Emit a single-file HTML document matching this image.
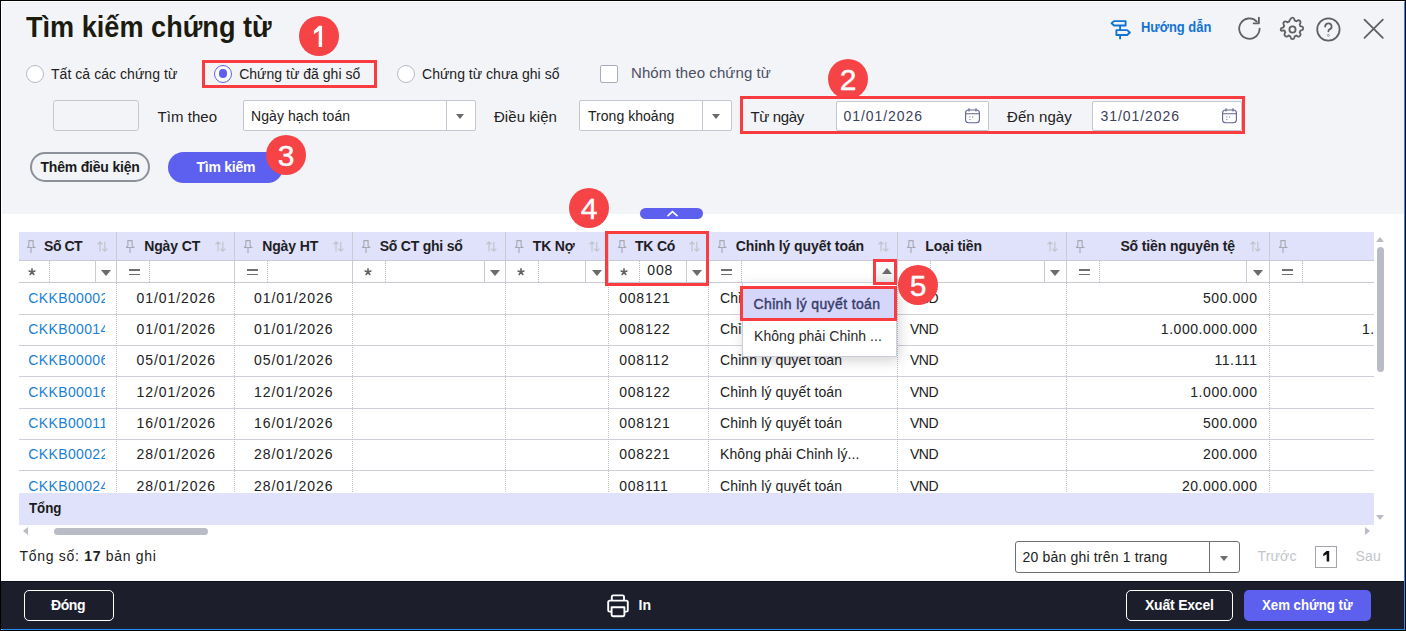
<!DOCTYPE html>
<html><head><meta charset="utf-8"><title>Tìm kiếm chứng từ</title>
<style>
html,body{margin:0;padding:0;width:1406px;height:631px;overflow:hidden;background:#000}
body{position:relative;font-family:"Liberation Sans", sans-serif}
.frame{position:absolute;left:1px;top:1px;width:1402px;height:627px;border-top:1px solid #fff;border-left:1px solid #fff;border-right:1px solid #1e8ff0;border-bottom:1px solid #1e8ff0;background:#f2f3f7;overflow:hidden}
.b{position:absolute;box-sizing:content-box}
.t{position:absolute;white-space:nowrap;line-height:1;font-family:"Liberation Sans", sans-serif}
.badge{position:absolute;width:40px;height:40px;border-radius:50%;background:#f54346;color:#fff;font-size:30px;line-height:42.5px;text-align:center;-webkit-text-stroke:0.4px #fff;font-family:"Liberation Sans", sans-serif}
</style></head>
<body>
<div id="root" style="position:absolute;left:0;top:0;width:1406px;height:631px">
<div class="frame"></div>
<div class="b" style="left:2px;top:2px;width:1402px;height:212px;background:#f3f4f8"></div>
<div class="b" style="left:2px;top:214px;width:1402px;height:367px;background:#fff"></div>
<div class="b" style="left:1px;top:581px;width:1403px;height:48px;background:#1d1e2c;border-top:1px solid #10121e;height:47px"></div>
<div class="t" style="left:26.3px;top:12.9px;font-size:29px;font-weight:700;color:#1c1b10;letter-spacing:0px;transform:scaleX(0.935);transform-origin:0 0">Tìm kiếm chứng từ</div>
<svg class="b" style="left:1108px;top:17px" width="24" height="24" viewBox="0 0 24 24" fill="none" stroke="#1273d4" stroke-width="1.9" stroke-linejoin="round">
<path d="M6 4.1 H17.6 V8.5 H6 L3.6 6.3 Z"/><path d="M8.4 13.1 H19.2 L21.9 15.5 L19.2 18 H8.4 Z"/>
<path d="M12.1 8.5 V13.1 M12.1 18 V22.3"/></svg>
<div class="t" style="left:1141.2px;top:20.3px;font-size:14px;font-weight:700;color:#1273d4;letter-spacing:0px;transform:scaleX(0.925);transform-origin:0 0">Hướng dẫn</div>
<svg class="b" style="left:1236px;top:15px" width="28" height="28" viewBox="0 0 28 28" fill="none" stroke="#606060" stroke-width="1.8" stroke-linecap="round" stroke-linejoin="round">
<path d="M23.6 13.6 A10.2 10.2 0 1 1 20.8 6.6"/><path d="M22.9 2.6 V8.3 H17.6"/></svg>
<svg class="b" style="left:1278px;top:14.6px" width="29" height="29" viewBox="0 0 24 24" fill="none" stroke="#606060" stroke-width="1.5" stroke-linejoin="round">
<path d="M12 2.2c.9 0 1.4.6 1.6 1.5l.2.9c.5.1 1 .3 1.4.6l.8-.5c.8-.5 1.6-.4 2.2.2s.7 1.4.2 2.2l-.5.8c.3.4.5.9.6 1.4l.9.2c.9.2 1.5.7 1.5 1.6s-.6 1.4-1.5 1.6l-.9.2c-.1.5-.3 1-.6 1.4l.5.8c.5.8.4 1.6-.2 2.2s-1.4.7-2.2.2l-.8-.5c-.4.3-.9.5-1.4.6l-.2.9c-.2.9-.7 1.5-1.6 1.5s-1.4-.6-1.6-1.5l-.2-.9c-.5-.1-1-.3-1.4-.6l-.8.5c-.8.5-1.6.4-2.2-.2s-.7-1.4-.2-2.2l.5-.8c-.3-.4-.5-.9-.6-1.4l-.9-.2C2.8 13.4 2.2 12.9 2.2 12s.6-1.4 1.5-1.6l.9-.2c.1-.5.3-1 .6-1.4l-.5-.8c-.5-.8-.4-1.6.2-2.2s1.4-.7 2.2-.2l.8.5c.4-.3.9-.5 1.4-.6l.2-.9C10.6 2.8 11.1 2.2 12 2.2z"/>
<circle cx="12" cy="12" r="2.55"/></svg>
<svg class="b" style="left:1314px;top:15px" width="29" height="29" viewBox="0 0 29 29" fill="none" stroke="#606060" stroke-width="1.75" stroke-linecap="round">
<circle cx="14.4" cy="14.5" r="11.2"/><path d="M11.2 11.6 A3.2 3.2 0 1 1 15.2 14.6 Q14.4 15 14.4 16.3"/><circle cx="14.4" cy="20.4" r="0.25" fill="#606060"/></svg>
<svg class="b" style="left:1362px;top:17px" width="24" height="24" viewBox="0 0 24 24" fill="none" stroke="#606060" stroke-width="1.8" stroke-linecap="round">
<path d="M2.5 2.6 L20.8 20.9 M20.8 2.6 L2.5 20.9"/></svg>
<div class="badge" style="left:299px;top:16px"><svg width="40" height="40" style="position:absolute;left:0;top:0"><path d="M20 9.8 H23.1 V31.1 H19.7 V14.9 L14.9 18.3 V14.7 Z" fill="#fff"/></svg></div>
<div class="b" style="left:26px;top:65px;width:16px;height:16px;border:1px solid #b8bbc4;border-radius:50%;background:#fff"></div>
<div class="t" style="left:51.0px;top:67.1px;font-size:14px;font-weight:400;color:#212121;letter-spacing:0.05px;">Tất cả các chứng từ</div>
<div class="b" style="left:202px;top:60px;width:169px;height:22px;border:3px solid #f93c3f"></div>
<div class="b" style="left:214px;top:65px;width:16px;height:16px;border:1px solid #5d5fee;border-radius:50%;background:#fff"></div>
<div class="b" style="left:218.6px;top:68.9px;width:8.8px;height:8.8px;border-radius:50%;background:#5d5fee"></div>
<div class="t" style="left:239.2px;top:67.1px;font-size:14px;font-weight:400;color:#212121;letter-spacing:0.02px;">Chứng từ đã ghi sổ</div>
<div class="b" style="left:397px;top:65px;width:16px;height:16px;border:1px solid #b8bbc4;border-radius:50%;background:#fff"></div>
<div class="t" style="left:422.0px;top:67.1px;font-size:14px;font-weight:400;color:#212121;letter-spacing:0.02px;">Chứng từ chưa ghi sổ</div>
<div class="b" style="left:600px;top:65px;width:16px;height:16px;border:1px solid #a9acbd;border-radius:2px;background:#fff"></div>
<div class="t" style="left:631.0px;top:65.1px;font-size:15px;font-weight:400;color:#4b4f62;letter-spacing:0.08px;">Nhóm theo chứng từ</div>
<div class="badge" style="left:828px;top:58.5px">2</div>
<div class="b" style="left:53px;top:100px;width:84px;height:29px;border:1px solid #c6c8cd;border-radius:3px"></div>
<div class="t" style="left:157.5px;top:109.0px;font-size:15px;font-weight:400;color:#212121;letter-spacing:0.05px;">Tìm theo</div>
<div class="b" style="left:243px;top:100px;width:231px;height:29px;border:1px solid #c4c6d0;border-radius:2px;background:#fff"></div>
<div class="b" style="left:446px;top:101px;width:1px;height:29px;background:#c4c6d0"></div>
<div class="b" style="left:456.2px;top:114.0px;width:0;height:0;border-left:4.3px solid transparent;border-right:4.3px solid transparent;border-top:5.8px solid #6b6b6b"></div>
<div class="t" style="left:251.0px;top:108.9px;font-size:14px;font-weight:400;color:#212121;letter-spacing:0.08px;">Ngày hạch toán</div>
<div class="t" style="left:494.0px;top:108.9px;font-size:15px;font-weight:400;color:#212121;letter-spacing:0.04px;">Điều kiện</div>
<div class="b" style="left:579px;top:100px;width:151px;height:29px;border:1px solid #c4c6d0;border-radius:2px;background:#fff"></div>
<div class="b" style="left:702px;top:101px;width:1px;height:29px;background:#c4c6d0"></div>
<div class="b" style="left:711.7px;top:114.0px;width:0;height:0;border-left:4.3px solid transparent;border-right:4.3px solid transparent;border-top:5.8px solid #6b6b6b"></div>
<div class="t" style="left:588.0px;top:108.9px;font-size:14px;font-weight:400;color:#212121;letter-spacing:0.04px;">Trong khoảng</div>
<div class="b" style="left:740px;top:96px;width:499px;height:32px;border:3px solid #f93c3f"></div>
<div class="t" style="left:750.5px;top:109.0px;font-size:15px;font-weight:400;color:#212121;letter-spacing:-0.35px;">Từ ngày</div>
<div class="t" style="left:1007.0px;top:109.0px;font-size:15px;font-weight:400;color:#212121;letter-spacing:0.07px;">Đến ngày</div>
<div class="b" style="left:836px;top:101px;width:151px;height:28px;border:1px solid #c4c6d0;border-radius:2px;background:#fff"></div>
<div class="t" style="left:843.5px;top:108.9px;font-size:14px;font-weight:400;color:#3b4159;letter-spacing:0.95px;">01/01/2026</div>
<svg class="b" style="left:963.5px;top:107px" width="17" height="17" viewBox="0 0 17 17" fill="none" stroke="#5f6590" stroke-width="1.1">
<rect x="1.6" y="3" width="13.8" height="12.8" rx="3"/><path d="M5 1.2 V4.4 M12 1.2 V4.4 M1.6 6.8 H15.4"/><path d="M5.4 10 h1 M8.2 10 h1 M5.4 12.6 h1" stroke-width="1"/></svg>
<div class="b" style="left:1092px;top:101px;width:148px;height:28px;border:1px solid #c4c6d0;border-radius:2px;background:#fff"></div>
<div class="t" style="left:1100.5px;top:108.9px;font-size:14px;font-weight:400;color:#3b4159;letter-spacing:0.95px;">31/01/2026</div>
<svg class="b" style="left:1220.5px;top:107px" width="17" height="17" viewBox="0 0 17 17" fill="none" stroke="#5f6590" stroke-width="1.1">
<rect x="1.6" y="3" width="13.8" height="12.8" rx="3"/><path d="M5 1.2 V4.4 M12 1.2 V4.4 M1.6 6.8 H15.4"/><path d="M5.4 10 h1 M8.2 10 h1 M5.4 12.6 h1" stroke-width="1"/></svg>
<div class="b" style="left:30px;top:152px;width:116px;height:26px;border:2px solid #8b9099;border-radius:15px"></div>
<div class="t" style="left:40.5px;top:160.4px;font-size:14px;font-weight:700;color:#1a1a1a;letter-spacing:-0.2px;">Thêm điều kiện</div>
<div class="b" style="left:168px;top:152px;width:115px;height:31px;background:#5d5fee;border-radius:16px"></div>
<div class="t" style="left:196.5px;top:160.4px;font-size:14px;font-weight:700;color:#fff;letter-spacing:-0.25px;">Tìm kiếm</div>
<div class="badge" style="left:266px;top:135px">3</div>
<div class="b" style="left:640px;top:208px;width:63px;height:11px;background:#5d5fee;border-radius:6px"></div>
<svg class="b" style="left:666px;top:209px" width="13" height="9" viewBox="0 0 13 9" fill="none" stroke="#fff" stroke-width="1.6"><path d="M1.5 7.2 L6.5 2.6 L11.5 7.2"/></svg>
<div class="badge" style="left:569px;top:188px">4</div>
<div class="b" style="left:19px;top:232px;width:1355px;height:293px;overflow:hidden" id="tbl">
<div class="b" style="left:0px;top:0px;width:1500px;height:28px;background:#e0e1fb"></div>
<div class="b" style="left:0px;top:28px;width:1500px;height:1px;background:#c8cad6"></div>
<div class="b" style="left:0px;top:50px;width:1500px;height:1px;background:#c8cad6"></div>
<div class="b" style="left:0px;top:82px;width:1500px;height:1px;background:#cdcfd9"></div>
<div class="b" style="left:0px;top:113px;width:1500px;height:1px;background:#cdcfd9"></div>
<div class="b" style="left:0px;top:144px;width:1500px;height:1px;background:#cdcfd9"></div>
<div class="b" style="left:0px;top:176px;width:1500px;height:1px;background:#cdcfd9"></div>
<div class="b" style="left:0px;top:207px;width:1500px;height:1px;background:#cdcfd9"></div>
<div class="b" style="left:0px;top:238px;width:1500px;height:1px;background:#cdcfd9"></div>
<div class="b" style="left:97px;top:0px;width:1px;height:50px;background:#c8cad6"></div>
<div class="b" style="left:97px;top:51px;width:1px;height:210px;background-image:linear-gradient(#c0c2cc 50%, transparent 50%);background-size:1px 2px"></div>
<div class="b" style="left:215px;top:0px;width:1px;height:50px;background:#c8cad6"></div>
<div class="b" style="left:215px;top:51px;width:1px;height:210px;background-image:linear-gradient(#c0c2cc 50%, transparent 50%);background-size:1px 2px"></div>
<div class="b" style="left:333px;top:0px;width:1px;height:50px;background:#c8cad6"></div>
<div class="b" style="left:333px;top:51px;width:1px;height:210px;background-image:linear-gradient(#c0c2cc 50%, transparent 50%);background-size:1px 2px"></div>
<div class="b" style="left:486px;top:0px;width:1px;height:50px;background:#c8cad6"></div>
<div class="b" style="left:486px;top:51px;width:1px;height:210px;background-image:linear-gradient(#c0c2cc 50%, transparent 50%);background-size:1px 2px"></div>
<div class="b" style="left:589px;top:0px;width:1px;height:50px;background:#c8cad6"></div>
<div class="b" style="left:589px;top:51px;width:1px;height:210px;background-image:linear-gradient(#c0c2cc 50%, transparent 50%);background-size:1px 2px"></div>
<div class="b" style="left:689px;top:0px;width:1px;height:50px;background:#c8cad6"></div>
<div class="b" style="left:689px;top:51px;width:1px;height:210px;background-image:linear-gradient(#c0c2cc 50%, transparent 50%);background-size:1px 2px"></div>
<div class="b" style="left:878px;top:0px;width:1px;height:50px;background:#c8cad6"></div>
<div class="b" style="left:878px;top:51px;width:1px;height:210px;background-image:linear-gradient(#c0c2cc 50%, transparent 50%);background-size:1px 2px"></div>
<div class="b" style="left:1047px;top:0px;width:1px;height:50px;background:#c8cad6"></div>
<div class="b" style="left:1047px;top:51px;width:1px;height:210px;background-image:linear-gradient(#c0c2cc 50%, transparent 50%);background-size:1px 2px"></div>
<div class="b" style="left:1250px;top:0px;width:1px;height:50px;background:#c8cad6"></div>
<div class="b" style="left:1250px;top:51px;width:1px;height:210px;background-image:linear-gradient(#c0c2cc 50%, transparent 50%);background-size:1px 2px"></div>
<svg class="b" style="left:7.5px;top:8px" width="10" height="14" viewBox="0 0 10 14" fill="none" stroke="#a6a9b3" stroke-width="1.1"><path d="M1.4 0.6 H6.6 M1.9 0.6 V5.8 L0.3 7.5 H7.7 L6.1 5.8 V0.6 M4 7.5 V12.9"/></svg>
<svg class="b" style="left:76px;top:9px" width="14" height="12" viewBox="0 0 14 12" fill="none" stroke="#c0c2cc" stroke-width="1.15"><path d="M5 10.4 V0.9 M2.5 3.4 L5 0.9 L7.5 3.4 M9.8 0.7 V10.2 M7.3 7.7 L9.8 10.2 L12.3 7.7"/></svg>
<div class="t" style="left:25.0px;top:6.9px;font-size:14px;font-weight:700;color:#1e1e24;letter-spacing:-0.45px;">Số CT</div>
<svg class="b" style="left:107.30000000000001px;top:8px" width="10" height="14" viewBox="0 0 10 14" fill="none" stroke="#a6a9b3" stroke-width="1.1"><path d="M1.4 0.6 H6.6 M1.9 0.6 V5.8 L0.3 7.5 H7.7 L6.1 5.8 V0.6 M4 7.5 V12.9"/></svg>
<svg class="b" style="left:194px;top:9px" width="14" height="12" viewBox="0 0 14 12" fill="none" stroke="#c0c2cc" stroke-width="1.15"><path d="M5 10.4 V0.9 M2.5 3.4 L5 0.9 L7.5 3.4 M9.8 0.7 V10.2 M7.3 7.7 L9.8 10.2 L12.3 7.7"/></svg>
<div class="t" style="left:125.2px;top:6.9px;font-size:14px;font-weight:700;color:#1e1e24;letter-spacing:-0.12px;">Ngày CT</div>
<svg class="b" style="left:225.3px;top:8px" width="10" height="14" viewBox="0 0 10 14" fill="none" stroke="#a6a9b3" stroke-width="1.1"><path d="M1.4 0.6 H6.6 M1.9 0.6 V5.8 L0.3 7.5 H7.7 L6.1 5.8 V0.6 M4 7.5 V12.9"/></svg>
<svg class="b" style="left:312px;top:9px" width="14" height="12" viewBox="0 0 14 12" fill="none" stroke="#c0c2cc" stroke-width="1.15"><path d="M5 10.4 V0.9 M2.5 3.4 L5 0.9 L7.5 3.4 M9.8 0.7 V10.2 M7.3 7.7 L9.8 10.2 L12.3 7.7"/></svg>
<div class="t" style="left:243.2px;top:6.9px;font-size:14px;font-weight:700;color:#1e1e24;letter-spacing:-0.12px;">Ngày HT</div>
<svg class="b" style="left:343.3px;top:8px" width="10" height="14" viewBox="0 0 10 14" fill="none" stroke="#a6a9b3" stroke-width="1.1"><path d="M1.4 0.6 H6.6 M1.9 0.6 V5.8 L0.3 7.5 H7.7 L6.1 5.8 V0.6 M4 7.5 V12.9"/></svg>
<svg class="b" style="left:465px;top:9px" width="14" height="12" viewBox="0 0 14 12" fill="none" stroke="#c0c2cc" stroke-width="1.15"><path d="M5 10.4 V0.9 M2.5 3.4 L5 0.9 L7.5 3.4 M9.8 0.7 V10.2 M7.3 7.7 L9.8 10.2 L12.3 7.7"/></svg>
<div class="t" style="left:360.7px;top:6.9px;font-size:14px;font-weight:700;color:#1e1e24;letter-spacing:-0.22px;">Số CT ghi sổ</div>
<svg class="b" style="left:496.29999999999995px;top:8px" width="10" height="14" viewBox="0 0 10 14" fill="none" stroke="#a6a9b3" stroke-width="1.1"><path d="M1.4 0.6 H6.6 M1.9 0.6 V5.8 L0.3 7.5 H7.7 L6.1 5.8 V0.6 M4 7.5 V12.9"/></svg>
<svg class="b" style="left:568px;top:9px" width="14" height="12" viewBox="0 0 14 12" fill="none" stroke="#c0c2cc" stroke-width="1.15"><path d="M5 10.4 V0.9 M2.5 3.4 L5 0.9 L7.5 3.4 M9.8 0.7 V10.2 M7.3 7.7 L9.8 10.2 L12.3 7.7"/></svg>
<div class="t" style="left:513.8px;top:6.9px;font-size:14px;font-weight:700;color:#1e1e24;letter-spacing:-0.2px;">TK Nợ</div>
<svg class="b" style="left:599.3px;top:8px" width="10" height="14" viewBox="0 0 10 14" fill="none" stroke="#a6a9b3" stroke-width="1.1"><path d="M1.4 0.6 H6.6 M1.9 0.6 V5.8 L0.3 7.5 H7.7 L6.1 5.8 V0.6 M4 7.5 V12.9"/></svg>
<svg class="b" style="left:668px;top:9px" width="14" height="12" viewBox="0 0 14 12" fill="none" stroke="#c0c2cc" stroke-width="1.15"><path d="M5 10.4 V0.9 M2.5 3.4 L5 0.9 L7.5 3.4 M9.8 0.7 V10.2 M7.3 7.7 L9.8 10.2 L12.3 7.7"/></svg>
<div class="t" style="left:616.0px;top:6.9px;font-size:14px;font-weight:700;color:#1e1e24;letter-spacing:-0.2px;">TK Có</div>
<svg class="b" style="left:699.3px;top:8px" width="10" height="14" viewBox="0 0 10 14" fill="none" stroke="#a6a9b3" stroke-width="1.1"><path d="M1.4 0.6 H6.6 M1.9 0.6 V5.8 L0.3 7.5 H7.7 L6.1 5.8 V0.6 M4 7.5 V12.9"/></svg>
<svg class="b" style="left:857px;top:9px" width="14" height="12" viewBox="0 0 14 12" fill="none" stroke="#c0c2cc" stroke-width="1.15"><path d="M5 10.4 V0.9 M2.5 3.4 L5 0.9 L7.5 3.4 M9.8 0.7 V10.2 M7.3 7.7 L9.8 10.2 L12.3 7.7"/></svg>
<div class="t" style="left:716.7px;top:6.9px;font-size:14px;font-weight:700;color:#1e1e24;letter-spacing:-0.08px;">Chỉnh lý quyết toán</div>
<svg class="b" style="left:888.3px;top:8px" width="10" height="14" viewBox="0 0 10 14" fill="none" stroke="#a6a9b3" stroke-width="1.1"><path d="M1.4 0.6 H6.6 M1.9 0.6 V5.8 L0.3 7.5 H7.7 L6.1 5.8 V0.6 M4 7.5 V12.9"/></svg>
<svg class="b" style="left:1026px;top:9px" width="14" height="12" viewBox="0 0 14 12" fill="none" stroke="#c0c2cc" stroke-width="1.15"><path d="M5 10.4 V0.9 M2.5 3.4 L5 0.9 L7.5 3.4 M9.8 0.7 V10.2 M7.3 7.7 L9.8 10.2 L12.3 7.7"/></svg>
<div class="t" style="left:906.3px;top:6.9px;font-size:14px;font-weight:700;color:#1e1e24;letter-spacing:-0.1px;">Loại tiền</div>
<svg class="b" style="left:1057.3px;top:8px" width="10" height="14" viewBox="0 0 10 14" fill="none" stroke="#a6a9b3" stroke-width="1.1"><path d="M1.4 0.6 H6.6 M1.9 0.6 V5.8 L0.3 7.5 H7.7 L6.1 5.8 V0.6 M4 7.5 V12.9"/></svg>
<svg class="b" style="left:1229px;top:9px" width="14" height="12" viewBox="0 0 14 12" fill="none" stroke="#c0c2cc" stroke-width="1.15"><path d="M5 10.4 V0.9 M2.5 3.4 L5 0.9 L7.5 3.4 M9.8 0.7 V10.2 M7.3 7.7 L9.8 10.2 L12.3 7.7"/></svg>
<div class="t" style="left:1101.4px;top:6.9px;font-size:14px;font-weight:700;color:#1e1e24;letter-spacing:-0.12px;">Số tiền nguyên tệ</div>
<svg class="b" style="left:1260.3px;top:8px" width="10" height="14" viewBox="0 0 10 14" fill="none" stroke="#a6a9b3" stroke-width="1.1"><path d="M1.4 0.6 H6.6 M1.9 0.6 V5.8 L0.3 7.5 H7.7 L6.1 5.8 V0.6 M4 7.5 V12.9"/></svg>
<svg class="b" style="left:9.3px;top:35.5px" width="8" height="8" viewBox="0 0 8 8" stroke="#626262" stroke-width="1.6" stroke-linecap="round"><path d="M4 4 L4 0.9 M4 4 L6.9 3.05 M4 4 L5.8 6.5 M4 4 L2.2 6.5 M4 4 L1.1 3.05"/></svg>
<div class="b" style="left:30px;top:29px;width:1px;height:21px;background-image:linear-gradient(#b5b7c1 50%, transparent 50%);background-size:1px 2px"></div>
<div class="b" style="left:76px;top:29px;width:1px;height:21px;background:#c8cad6"></div>
<div class="b" style="left:81.55px;top:38px;width:0px;height:0px;border-left:5px solid transparent;border-right:5px solid transparent;border-top:6px solid #6b6b6b"></div>
<div class="b" style="left:110px;top:37.30000000000001px;width:11px;height:1.5px;background:#707070"></div>
<div class="b" style="left:110px;top:41.80000000000001px;width:11px;height:1.5px;background:#707070"></div>
<div class="b" style="left:130px;top:29px;width:1px;height:21px;background-image:linear-gradient(#b5b7c1 50%, transparent 50%);background-size:1px 2px"></div>
<div class="b" style="left:228px;top:37.30000000000001px;width:11px;height:1.5px;background:#707070"></div>
<div class="b" style="left:228px;top:41.80000000000001px;width:11px;height:1.5px;background:#707070"></div>
<div class="b" style="left:248px;top:29px;width:1px;height:21px;background-image:linear-gradient(#b5b7c1 50%, transparent 50%);background-size:1px 2px"></div>
<svg class="b" style="left:345.2px;top:35.5px" width="8" height="8" viewBox="0 0 8 8" stroke="#626262" stroke-width="1.6" stroke-linecap="round"><path d="M4 4 L4 0.9 M4 4 L6.9 3.05 M4 4 L5.8 6.5 M4 4 L2.2 6.5 M4 4 L1.1 3.05"/></svg>
<div class="b" style="left:366px;top:29px;width:1px;height:21px;background-image:linear-gradient(#b5b7c1 50%, transparent 50%);background-size:1px 2px"></div>
<div class="b" style="left:465px;top:29px;width:1px;height:21px;background:#c8cad6"></div>
<div class="b" style="left:470.6px;top:38px;width:0px;height:0px;border-left:5px solid transparent;border-right:5px solid transparent;border-top:6px solid #6b6b6b"></div>
<svg class="b" style="left:498.2px;top:35.5px" width="8" height="8" viewBox="0 0 8 8" stroke="#626262" stroke-width="1.6" stroke-linecap="round"><path d="M4 4 L4 0.9 M4 4 L6.9 3.05 M4 4 L5.8 6.5 M4 4 L2.2 6.5 M4 4 L1.1 3.05"/></svg>
<div class="b" style="left:519px;top:29px;width:1px;height:21px;background-image:linear-gradient(#b5b7c1 50%, transparent 50%);background-size:1px 2px"></div>
<div class="b" style="left:566px;top:29px;width:1px;height:21px;background:#c8cad6"></div>
<div class="b" style="left:572.6px;top:38px;width:0px;height:0px;border-left:5px solid transparent;border-right:5px solid transparent;border-top:6px solid #6b6b6b"></div>
<svg class="b" style="left:601.2px;top:35.5px" width="8" height="8" viewBox="0 0 8 8" stroke="#626262" stroke-width="1.6" stroke-linecap="round"><path d="M4 4 L4 0.9 M4 4 L6.9 3.05 M4 4 L5.8 6.5 M4 4 L2.2 6.5 M4 4 L1.1 3.05"/></svg>
<div class="b" style="left:620px;top:29px;width:1px;height:21px;background-image:linear-gradient(#b5b7c1 50%, transparent 50%);background-size:1px 2px"></div>
<div class="b" style="left:667px;top:29px;width:1px;height:21px;background:#c8cad6"></div>
<div class="b" style="left:673.0px;top:38px;width:0px;height:0px;border-left:5px solid transparent;border-right:5px solid transparent;border-top:6px solid #6b6b6b"></div>
<div class="b" style="left:702px;top:37.30000000000001px;width:11px;height:1.5px;background:#707070"></div>
<div class="b" style="left:702px;top:41.80000000000001px;width:11px;height:1.5px;background:#707070"></div>
<div class="b" style="left:722px;top:29px;width:1px;height:21px;background-image:linear-gradient(#b5b7c1 50%, transparent 50%);background-size:1px 2px"></div>
<div class="b" style="left:891px;top:37.30000000000001px;width:11px;height:1.5px;background:#707070"></div>
<div class="b" style="left:891px;top:41.80000000000001px;width:11px;height:1.5px;background:#707070"></div>
<div class="b" style="left:911px;top:29px;width:1px;height:21px;background-image:linear-gradient(#b5b7c1 50%, transparent 50%);background-size:1px 2px"></div>
<div class="b" style="left:1025px;top:29px;width:1px;height:21px;background:#c8cad6"></div>
<div class="b" style="left:1031.45px;top:38px;width:0px;height:0px;border-left:5px solid transparent;border-right:5px solid transparent;border-top:6px solid #6b6b6b"></div>
<div class="b" style="left:1060px;top:37.30000000000001px;width:11px;height:1.5px;background:#707070"></div>
<div class="b" style="left:1060px;top:41.80000000000001px;width:11px;height:1.5px;background:#707070"></div>
<div class="b" style="left:1080px;top:29px;width:1px;height:21px;background-image:linear-gradient(#b5b7c1 50%, transparent 50%);background-size:1px 2px"></div>
<div class="b" style="left:1227px;top:29px;width:1px;height:21px;background:#c8cad6"></div>
<div class="b" style="left:1234.0px;top:38px;width:0px;height:0px;border-left:5px solid transparent;border-right:5px solid transparent;border-top:6px solid #6b6b6b"></div>
<div class="b" style="left:1263px;top:37.30000000000001px;width:11px;height:1.5px;background:#707070"></div>
<div class="b" style="left:1263px;top:41.80000000000001px;width:11px;height:1.5px;background:#707070"></div>
<div class="b" style="left:1283px;top:29px;width:1px;height:21px;background-image:linear-gradient(#b5b7c1 50%, transparent 50%);background-size:1px 2px"></div>
<div class="t" style="left:628.3px;top:31.3px;font-size:14px;font-weight:400;color:#212121;letter-spacing:0.8px;">008</div>
<div class="b" style="left:856px;top:29px;width:21px;height:21px;background:linear-gradient(#fff,#ececee)"></div>
<div class="b" style="left:863px;top:35.60000000000002px;width:0px;height:0px;border-left:5px solid transparent;border-right:5px solid transparent;border-bottom:6px solid #6b6b6b"></div>
<div class="b" style="left:9.3px;top:59.3px;width:76.7px;height:16px;overflow:hidden"><div class="t" style="left:0;top:0;font-size:14px;color:#1a80d6;letter-spacing:0.37px">CKKB00002</div></div>
<div class="t" style="left:117.5px;top:59.3px;font-size:14px;font-weight:400;color:#212121;letter-spacing:0.95px;">01/01/2026</div>
<div class="t" style="left:235.0px;top:59.3px;font-size:14px;font-weight:400;color:#212121;letter-spacing:0.95px;">01/01/2026</div>
<div class="t" style="left:600.2px;top:59.3px;font-size:14px;font-weight:400;color:#212121;letter-spacing:0.8px;">008121</div>
<div class="t" style="left:701.0px;top:59.3px;font-size:14px;font-weight:400;color:#212121;letter-spacing:0.12px;">Chỉnh lý quyết toán</div>
<div class="t" style="left:891.0px;top:59.3px;font-size:14px;font-weight:400;color:#212121;letter-spacing:-0.5px;">VND</div>
<div class="t" style="right:116.5px;top:59.3px;font-size:14px;color:#212121;letter-spacing:0.55px">500.000</div>
<div class="b" style="left:9.3px;top:90.3px;width:76.7px;height:16px;overflow:hidden"><div class="t" style="left:0;top:0;font-size:14px;color:#1a80d6;letter-spacing:0.37px">CKKB00014</div></div>
<div class="t" style="left:117.5px;top:90.3px;font-size:14px;font-weight:400;color:#212121;letter-spacing:0.95px;">01/01/2026</div>
<div class="t" style="left:235.0px;top:90.3px;font-size:14px;font-weight:400;color:#212121;letter-spacing:0.95px;">01/01/2026</div>
<div class="t" style="left:600.2px;top:90.3px;font-size:14px;font-weight:400;color:#212121;letter-spacing:0.8px;">008122</div>
<div class="t" style="left:701.0px;top:90.3px;font-size:14px;font-weight:400;color:#212121;letter-spacing:0.12px;">Chỉnh lý quyết toán</div>
<div class="t" style="left:891.0px;top:90.3px;font-size:14px;font-weight:400;color:#212121;letter-spacing:-0.5px;">VND</div>
<div class="t" style="right:116.5px;top:90.3px;font-size:14px;color:#212121;letter-spacing:0.55px">1.000.000.000</div>
<div class="t" style="left:1343.0px;top:90.3px;font-size:14px;font-weight:400;color:#212121;letter-spacing:0.55px;">1.</div>
<div class="b" style="left:9.3px;top:121.3px;width:76.7px;height:16px;overflow:hidden"><div class="t" style="left:0;top:0;font-size:14px;color:#1a80d6;letter-spacing:0.37px">CKKB00006</div></div>
<div class="t" style="left:117.5px;top:121.3px;font-size:14px;font-weight:400;color:#212121;letter-spacing:0.95px;">05/01/2026</div>
<div class="t" style="left:235.0px;top:121.3px;font-size:14px;font-weight:400;color:#212121;letter-spacing:0.95px;">05/01/2026</div>
<div class="t" style="left:600.2px;top:121.3px;font-size:14px;font-weight:400;color:#212121;letter-spacing:0.8px;">008112</div>
<div class="t" style="left:701.0px;top:121.3px;font-size:14px;font-weight:400;color:#212121;letter-spacing:0.12px;">Chỉnh lý quyết toán</div>
<div class="t" style="left:891.0px;top:121.3px;font-size:14px;font-weight:400;color:#212121;letter-spacing:-0.5px;">VND</div>
<div class="t" style="right:116.5px;top:121.3px;font-size:14px;color:#212121;letter-spacing:0.55px">11.111</div>
<div class="b" style="left:9.3px;top:153.3px;width:76.7px;height:16px;overflow:hidden"><div class="t" style="left:0;top:0;font-size:14px;color:#1a80d6;letter-spacing:0.37px">CKKB00016</div></div>
<div class="t" style="left:117.5px;top:153.3px;font-size:14px;font-weight:400;color:#212121;letter-spacing:0.95px;">12/01/2026</div>
<div class="t" style="left:235.0px;top:153.3px;font-size:14px;font-weight:400;color:#212121;letter-spacing:0.95px;">12/01/2026</div>
<div class="t" style="left:600.2px;top:153.3px;font-size:14px;font-weight:400;color:#212121;letter-spacing:0.8px;">008122</div>
<div class="t" style="left:701.0px;top:153.3px;font-size:14px;font-weight:400;color:#212121;letter-spacing:0.12px;">Chỉnh lý quyết toán</div>
<div class="t" style="left:891.0px;top:153.3px;font-size:14px;font-weight:400;color:#212121;letter-spacing:-0.5px;">VND</div>
<div class="t" style="right:116.5px;top:153.3px;font-size:14px;color:#212121;letter-spacing:0.55px">1.000.000</div>
<div class="b" style="left:9.3px;top:184.3px;width:76.7px;height:16px;overflow:hidden"><div class="t" style="left:0;top:0;font-size:14px;color:#1a80d6;letter-spacing:0.37px">CKKB00011</div></div>
<div class="t" style="left:117.5px;top:184.3px;font-size:14px;font-weight:400;color:#212121;letter-spacing:0.95px;">16/01/2026</div>
<div class="t" style="left:235.0px;top:184.3px;font-size:14px;font-weight:400;color:#212121;letter-spacing:0.95px;">16/01/2026</div>
<div class="t" style="left:600.2px;top:184.3px;font-size:14px;font-weight:400;color:#212121;letter-spacing:0.8px;">008121</div>
<div class="t" style="left:701.0px;top:184.3px;font-size:14px;font-weight:400;color:#212121;letter-spacing:0.12px;">Chỉnh lý quyết toán</div>
<div class="t" style="left:891.0px;top:184.3px;font-size:14px;font-weight:400;color:#212121;letter-spacing:-0.5px;">VND</div>
<div class="t" style="right:116.5px;top:184.3px;font-size:14px;color:#212121;letter-spacing:0.55px">500.000</div>
<div class="b" style="left:9.3px;top:215.3px;width:76.7px;height:16px;overflow:hidden"><div class="t" style="left:0;top:0;font-size:14px;color:#1a80d6;letter-spacing:0.37px">CKKB00022</div></div>
<div class="t" style="left:117.5px;top:215.3px;font-size:14px;font-weight:400;color:#212121;letter-spacing:0.95px;">28/01/2026</div>
<div class="t" style="left:235.0px;top:215.3px;font-size:14px;font-weight:400;color:#212121;letter-spacing:0.95px;">28/01/2026</div>
<div class="t" style="left:600.2px;top:215.3px;font-size:14px;font-weight:400;color:#212121;letter-spacing:0.8px;">008221</div>
<div class="t" style="left:701.0px;top:215.3px;font-size:14px;font-weight:400;color:#212121;letter-spacing:0.12px;">Không phải Chỉnh lý...</div>
<div class="t" style="left:891.0px;top:215.3px;font-size:14px;font-weight:400;color:#212121;letter-spacing:-0.5px;">VND</div>
<div class="t" style="right:116.5px;top:215.3px;font-size:14px;color:#212121;letter-spacing:0.55px">200.000</div>
<div class="b" style="left:9.3px;top:247.3px;width:76.7px;height:16px;overflow:hidden"><div class="t" style="left:0;top:0;font-size:14px;color:#1a80d6;letter-spacing:0.37px">CKKB00024</div></div>
<div class="t" style="left:117.5px;top:247.3px;font-size:14px;font-weight:400;color:#212121;letter-spacing:0.95px;">28/01/2026</div>
<div class="t" style="left:235.0px;top:247.3px;font-size:14px;font-weight:400;color:#212121;letter-spacing:0.95px;">28/01/2026</div>
<div class="t" style="left:600.2px;top:247.3px;font-size:14px;font-weight:400;color:#212121;letter-spacing:0.8px;">008111</div>
<div class="t" style="left:701.0px;top:247.3px;font-size:14px;font-weight:400;color:#212121;letter-spacing:0.12px;">Chỉnh lý quyết toán</div>
<div class="t" style="left:891.0px;top:247.3px;font-size:14px;font-weight:400;color:#212121;letter-spacing:-0.5px;">VND</div>
<div class="t" style="right:116.5px;top:247.3px;font-size:14px;color:#212121;letter-spacing:0.55px">20.000.000</div>
<div class="b" style="left:0px;top:261px;width:1500px;height:32px;background:#e0e1fb"></div>
<div class="t" style="left:10.3px;top:269.1px;font-size:14px;font-weight:700;color:#1a1a1a;letter-spacing:0px;transform:scaleX(0.95);transform-origin:0 0">Tổng</div>
</div>
<div class="b" style="left:742px;top:282px;width:153px;height:73px;background:#fff;border:1px solid #ccceda;box-shadow:2px 4px 12px rgba(0,0,0,0.17)"></div>
<div class="b" style="left:740px;top:286px;width:151px;height:29px;background:#d5d6f9;border:3px solid #f93c3f"></div>
<div class="t" style="left:753.5px;top:296.7px;font-size:14px;font-weight:400;color:#383c6a;letter-spacing:0.37px;-webkit-text-stroke:0.4px #383c6a">Chỉnh lý quyết toán</div>
<div class="t" style="left:754.0px;top:329.0px;font-size:14px;font-weight:400;color:#2a2a2a;letter-spacing:0.05px;">Không phải Chỉnh ...</div>
<div class="b" style="left:873px;top:259px;width:18px;height:20px;border:3px solid #f93c3f"></div>
<div class="badge" style="left:898px;top:265px">5</div>
<div class="b" style="left:605px;top:231px;width:98px;height:49px;border:3px solid #f93c3f"></div>
<div class="b" style="left:1377px;top:247px;width:7px;height:125px;background:#b9bcc4;border-radius:4px"></div>
<div class="b" style="left:1376px;top:237px;width:0px;height:0px;border-left:4.5px solid transparent;border-right:4.5px solid transparent;border-bottom:5px solid #b9bcc4"></div>
<div class="b" style="left:1376px;top:515px;width:0px;height:0px;border-left:4.6px solid transparent;border-right:4.6px solid transparent;border-top:5.4px solid #b9bcc4"></div>
<div class="b" style="left:54px;top:528px;width:154px;height:7px;background:#b9bcc4;border-radius:4px"></div>
<div class="b" style="left:22.8px;top:527px;width:0px;height:0px;border-top:4.6px solid transparent;border-bottom:4.6px solid transparent;border-right:5.1px solid #b9bcc4"></div>
<div class="b" style="left:1365px;top:527px;width:0px;height:0px;border-top:4.6px solid transparent;border-bottom:4.6px solid transparent;border-left:5.2px solid #b9bcc4"></div>
<div class="t" style="left:19.5px;top:548.6px;font-size:14px;color:#212121;letter-spacing:0.7px">Tổng số: <b>17</b> bản ghi</div>
<div class="b" style="left:1015px;top:541px;width:223px;height:30px;border:1px solid #707070;border-radius:3px;background:#fff"></div>
<div class="b" style="left:1209px;top:542px;width:1px;height:30px;background:#707070"></div>
<div class="b" style="left:1219.5px;top:555.5px;width:0;height:0;border-left:4.3px solid transparent;border-right:4.3px solid transparent;border-top:5.8px solid #6b6b6b"></div>
<div class="t" style="left:1022.5px;top:550.1px;font-size:14px;font-weight:400;color:#212121;letter-spacing:0.18px;">20 bản ghi trên 1 trang</div>
<div class="t" style="left:1257.5px;top:548.9px;font-size:14px;font-weight:400;color:#c3c5cc;letter-spacing:0.18px;">Trước</div>
<div class="b" style="left:1315px;top:546px;width:20px;height:20px;border:1px solid #a3a4ad;background:#fff"></div>
<svg class="b" style="left:1315px;top:546px" width="22" height="22" viewBox="1315 546 22 22"><path d="M1326.5 551 H1329.2 V561.4 H1326.7 V554.3 L1323.3 556.3 V553.8 Z" fill="#111"/></svg>
<div class="t" style="left:1355.5px;top:548.9px;font-size:14px;font-weight:400;color:#c3c5cc;letter-spacing:0.22px;">Sau</div>
<div class="b" style="left:24px;top:590px;width:88px;height:29px;border:1px solid #fff;border-radius:5px"></div>
<div class="t" style="left:51.0px;top:597.9px;font-size:14px;font-weight:700;color:#fff;letter-spacing:-0.4px;">Đóng</div>
<svg class="b" style="left:605px;top:592px" width="27" height="27" viewBox="0 0 27 27" fill="none" stroke="#fff" stroke-width="1.9" stroke-linejoin="round">
<path d="M6.8 8.6 V4.8 Q6.8 3.4 8.2 3.4 H17.6 Q19 3.4 19 4.8 V8.6"/><path d="M6.6 19.6 H4.6 Q3.2 19.6 3.2 18.2 V10.2 Q3.2 8.6 4.8 8.6 H21.2 Q22.8 8.6 22.8 10.2 V18.2 Q22.8 19.6 21.4 19.6 H19.4"/>
<path d="M6.6 15.2 H19.4 V22.8 Q19.4 24.2 18 24.2 H8 Q6.6 24.2 6.6 22.8 Z"/></svg>
<div class="t" style="left:638.5px;top:598.0px;font-size:14px;font-weight:700;color:#fff;letter-spacing:0px;">In</div>
<div class="b" style="left:1126px;top:590px;width:105px;height:29px;border:1px solid #fff;border-radius:5px"></div>
<div class="t" style="left:1145.0px;top:597.9px;font-size:14px;font-weight:700;color:#fff;letter-spacing:-0.22px;">Xuất Excel</div>
<div class="b" style="left:1244px;top:590px;width:127px;height:31px;background:#5d5fee;border-radius:5px"></div>
<div class="t" style="left:1261.8px;top:597.9px;font-size:14px;font-weight:700;color:#fff;letter-spacing:0px;transform:scaleX(0.945);transform-origin:0 0">Xem chứng từ</div>
</div>
</body></html>
